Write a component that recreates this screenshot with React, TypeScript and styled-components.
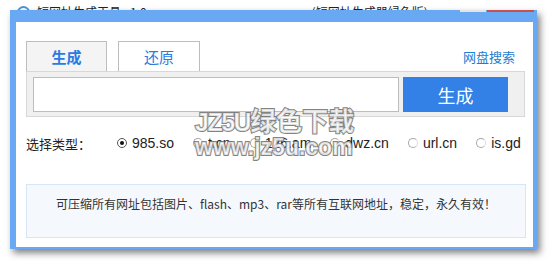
import { useState } from "react";
import styled, { createGlobalStyle } from "styled-components";

const GlobalStyle = createGlobalStyle`
  * { box-sizing: border-box; }
  body {
    margin: 0;
    background: #fff;
    font-family: "Liberation Sans", "Noto Sans CJK SC", sans-serif;
  }
`;

const CJK = `"Noto Sans CJK SC", "Liberation Sans", sans-serif`;

const Page = styled.div`
  position: relative;
  width: 550px;
  height: 261px;
  overflow: hidden;
  background: #fff;
`;

// only the lowest slice of the caption shows above the frame
const TitleStrip = styled.div`
  display: flex;
  align-items: flex-start;
  height: 10px;
  overflow: hidden;
  padding: 6px 0 0 17px;
`;

const TitleIcon = styled.span`
  flex: none;
  width: 13px;
  height: 13px;
  border: 2px solid #4d8fd6;
  border-radius: 50%;
`;

const TitleText = styled.span<{ $left: number }>`
  flex: none;
  margin-left: ${({ $left }) => $left}px;
  font-family: ${CJK};
  font-size: 12px;
  line-height: 12px;
  white-space: nowrap;
  color: #222;
`;

const Window = styled.div`
  margin-left: 10px;
  width: 527px;
  background: #69a9f3;
  box-shadow: 3px 4px 7px rgba(0, 0, 0, 0.5);
`;

const TitleBar = styled.div`
  display: flex;
  justify-content: flex-end;
  height: 12px;
  padding-right: 3px;
`;

const CaptionButton = styled.span<{ $w: number; $color: string }>`
  width: ${({ $w }) => $w}px;
  height: 2px;
  margin-left: 1px;
  background: ${({ $color }) => $color};
`;

const Body = styled.div`
  position: relative;
  margin: 0 4px 0 6px;
  height: 225px;
  padding: 19px 8px 0 10px;
  background: #fff;
`;

const BottomEdge = styled.div`
  height: 2px;
`;

const TabRow = styled.div`
  display: flex;
  align-items: flex-end;
  gap: 11px;
  height: 30px;
`;

const Tab = styled.div<{ $active?: boolean; $w: number }>`
  display: flex;
  align-items: center;
  justify-content: center;
  width: ${({ $w }) => $w}px;
  height: 30px;
  border: 1px solid #bdbdbd;
  border-bottom: 0;
  background: ${({ $active }) => ($active ? "#f4f4f4" : "#fff")};
  color: #2a7be0;
  font-family: ${CJK};
  font-size: 15px;
  font-weight: ${({ $active }) => ($active ? 700 : 400)};
  cursor: pointer;
`;

const SearchLink = styled.a`
  align-self: center;
  margin: 2px 10px 0 auto;
  font-family: ${CJK};
  font-size: 13px;
  line-height: 14px;
  color: #1b80d0;
  text-decoration: none;
`;

const Panel = styled.div`
  display: flex;
  gap: 4px;
  width: 499px;
  padding: 5px 16px 4px 6px;
  border: 1px solid #d8d8d8;
  background: #f0f0f0;
`;

const UrlInput = styled.input`
  width: 366px;
  height: 35px;
  border: 1px solid #bdbdbd;
  background: #fff;
  outline: none;
  padding: 0 6px;
  font-size: 14px;
`;

const GenButton = styled.button`
  width: 105px;
  height: 35px;
  border: 0;
  background: #3381e6;
  color: #fff;
  font-family: ${CJK};
  font-size: 18px;
  cursor: pointer;
`;

const OptionsRow = styled.div`
  display: flex;
  align-items: center;
  height: 20px;
  margin-top: 16px;
`;

const OptionsLabel = styled.span`
  width: 91px;
  font-family: ${CJK};
  font-size: 13px;
  color: #222;
`;

const Options = styled.div`
  display: flex;
  align-items: center;
  gap: 19px;
`;

const Option = styled.label`
  display: flex;
  align-items: center;
  gap: 5px;
  font-size: 14px;
  color: #222;
  cursor: pointer;
`;

const Radio = styled.span<{ $checked: boolean }>`
  display: flex;
  align-items: center;
  justify-content: center;
  width: 10px;
  height: 10px;
  border-radius: 50%;
  border: 1px solid ${({ $checked }) => ($checked ? "#555" : "#a8a8a8")};
  border-right-color: ${({ $checked }) => ($checked ? "#555" : "#dcdcdc")};
  background: #fff;

  &::after {
    content: "";
    display: ${({ $checked }) => ($checked ? "block" : "none")};
    width: 4px;
    height: 4px;
    border-radius: 50%;
    background: #111;
  }
`;

const InfoBox = styled.div`
  width: 500px;
  height: 54px;
  margin-top: 31px;
  padding-top: 12px;
  border: 1px solid #d6e6f8;
  background: #f5f9fe;
  text-align: center;
  font-family: ${CJK};
  font-size: 12px;
  line-height: 14px;
  color: #333;
`;

// site watermark stamped over the screenshot
const Watermark = styled.div`
  position: absolute;
  left: 179px;
  top: 87px;
  display: flex;
  flex-direction: column;
  pointer-events: none;
  font-family: "Liberation Sans", "Noto Sans CJK SC", sans-serif;
  font-weight: 700;
  color: rgba(255, 255, 255, 0.75);
  -webkit-text-stroke: 2px rgba(110, 110, 110, 0.85);
  paint-order: stroke fill;
`;

const MarkLine = styled.span<{ $size: number; $lh: number }>`
  font-size: ${({ $size }) => $size}px;
  line-height: ${({ $lh }) => $lh}px;
  white-space: nowrap;
`;

const MarkLatin = styled.span`
  font-size: 25px;
  letter-spacing: -1.5px;
`;

const hosts = ["985.so", "t.cn", "126.am", "dwz.cn", "url.cn", "is.gd"];

export default function App() {
  const [host, setHost] = useState("985.so");
  const [tab, setTab] = useState(0);

  return (
    <Page>
      <GlobalStyle />
      <TitleStrip>
        <TitleIcon />
        <TitleText $left={7}>短网址生成工具 v1.0</TitleText>
        <TitleText $left={165}>(短网址生成器绿色版)</TitleText>
      </TitleStrip>
      <Window>
        <TitleBar>
          <CaptionButton $w={26} $color="#e4e4e4" />
          <CaptionButton $w={47} $color="#c9504f" />
        </TitleBar>
        <Body>
          <TabRow>
            <Tab $w={81} $active={tab === 0} onClick={() => setTab(0)}>
              生成
            </Tab>
            <Tab $w={82} $active={tab === 1} onClick={() => setTab(1)}>
              还原
            </Tab>
            <SearchLink href="#">网盘搜索</SearchLink>
          </TabRow>
          <Panel>
            <UrlInput />
            <GenButton>生成</GenButton>
          </Panel>
          <OptionsRow>
            <OptionsLabel>选择类型：</OptionsLabel>
            <Options>
              {hosts.map((h) => (
                <Option key={h} onClick={() => setHost(h)}>
                  <Radio $checked={host === h} />
                  {h}
                </Option>
              ))}
            </Options>
          </OptionsRow>
          <InfoBox>
            可压缩所有网址包括图片、flash、mp3、rar等所有互联网地址，稳定，永久有效！
          </InfoBox>
          <Watermark>
            <MarkLine $size={26} $lh={26}>
              <MarkLatin>JZ5U</MarkLatin>绿色下载
            </MarkLine>
            <MarkLine $size={23} $lh={24}>
              www.jz5u.com
            </MarkLine>
          </Watermark>
        </Body>
        <BottomEdge />
      </Window>
    </Page>
  );
}
